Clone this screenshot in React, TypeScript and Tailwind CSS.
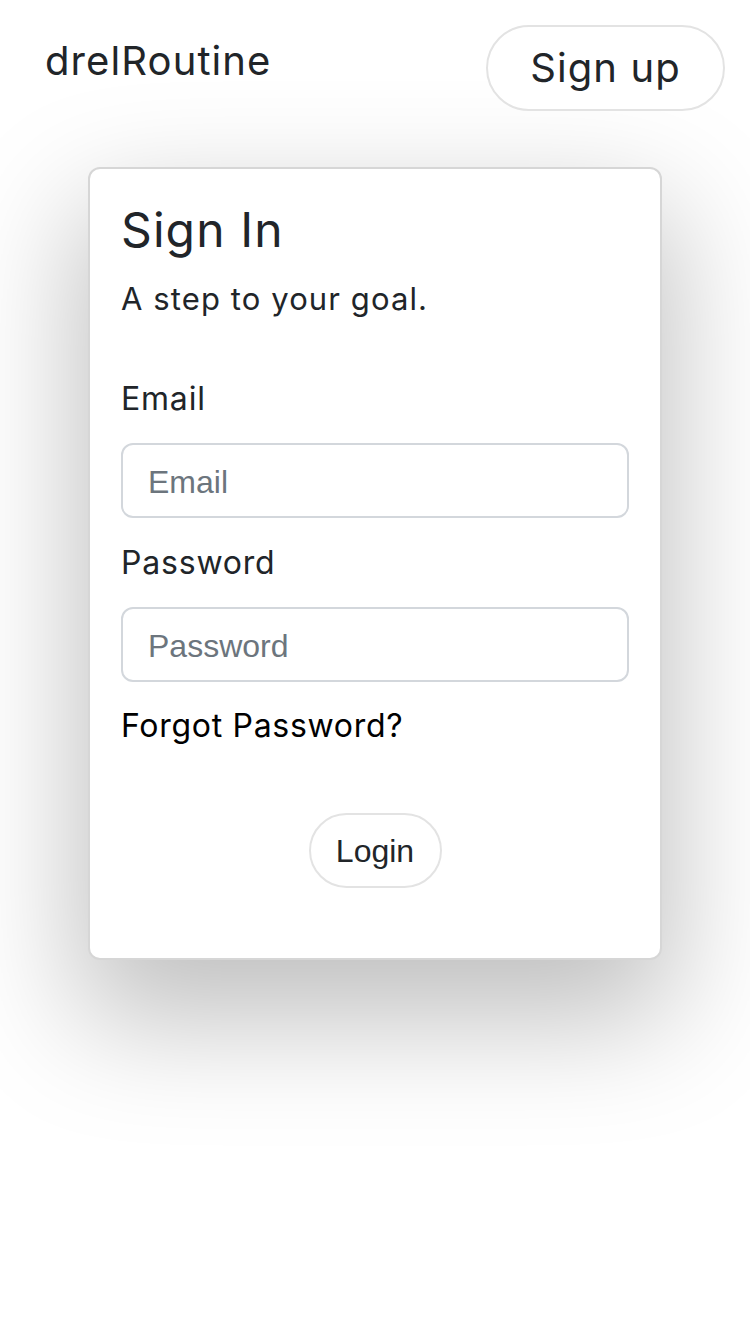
import React from "react";

const SignIn = () => {
  return (
    <div className="min-h-screen bg-white font-['Inter',sans-serif] text-[#212529]">
      <header className="flex flex-row items-start justify-between pl-[45px] pr-[25px] pt-[25px]">
        <div className="mt-[12px] text-[40px] leading-[48px] tracking-[1.1px]">drelRoutine</div>
        <button className="w-[239px] h-[86px] rounded-full border-2 border-[#e3e3e3] bg-white text-[40px] leading-[48px] tracking-[1.1px] text-[#212529]">
          Sign up
        </button>
      </header>

      <div className="mx-auto mt-[56px] w-[574px] h-[793px] rounded-[12px] border-2 border-[#d6d6d6] bg-white px-[31px] pt-[32px] shadow-[0_50px_120px_10px_rgba(0,0,0,0.25)]">
        <h2 className="text-[48px] leading-[58px] font-normal tracking-[1.1px]">Sign In</h2>
        <p className="mt-[20px] text-[31px] leading-[40px] tracking-[1.1px]">A step to your goal.</p>

        <form className="flex flex-col">
          <label className="mt-[60px] text-[32px] leading-[40px] tracking-[0.8px]">Email</label>
          <input
            type="email"
            placeholder="Email"
            className="mt-[24px] h-[75px] w-full rounded-[12px] border-2 border-[#d3d7dc] px-[25px] pt-[4px] font-['Liberation_Sans',sans-serif] text-[32px] placeholder:text-[#6c757d] outline-none"
          />
          <label className="mt-[25px] text-[32px] leading-[40px] tracking-[0.8px]">Password</label>
          <input
            type="password"
            placeholder="Password"
            className="mt-[24px] h-[75px] w-full rounded-[12px] border-2 border-[#d3d7dc] px-[25px] pt-[4px] font-['Liberation_Sans',sans-serif] text-[32px] placeholder:text-[#6c757d] outline-none"
          />
          <a className="mt-[24px] text-[32px] leading-[40px] tracking-[0.7px] text-black">Forgot Password?</a>
          <div className="mt-[67px] flex justify-center">
            <button
              type="button"
              className="w-[133px] h-[75px] rounded-full border-2 border-[#e3e3e3] bg-white font-['Liberation_Sans',sans-serif] text-[32px] text-[#212529]"
            >
              Login
            </button>
          </div>
        </form>
      </div>
    </div>
  );
};

export default function App() {
  return <SignIn />;
}
